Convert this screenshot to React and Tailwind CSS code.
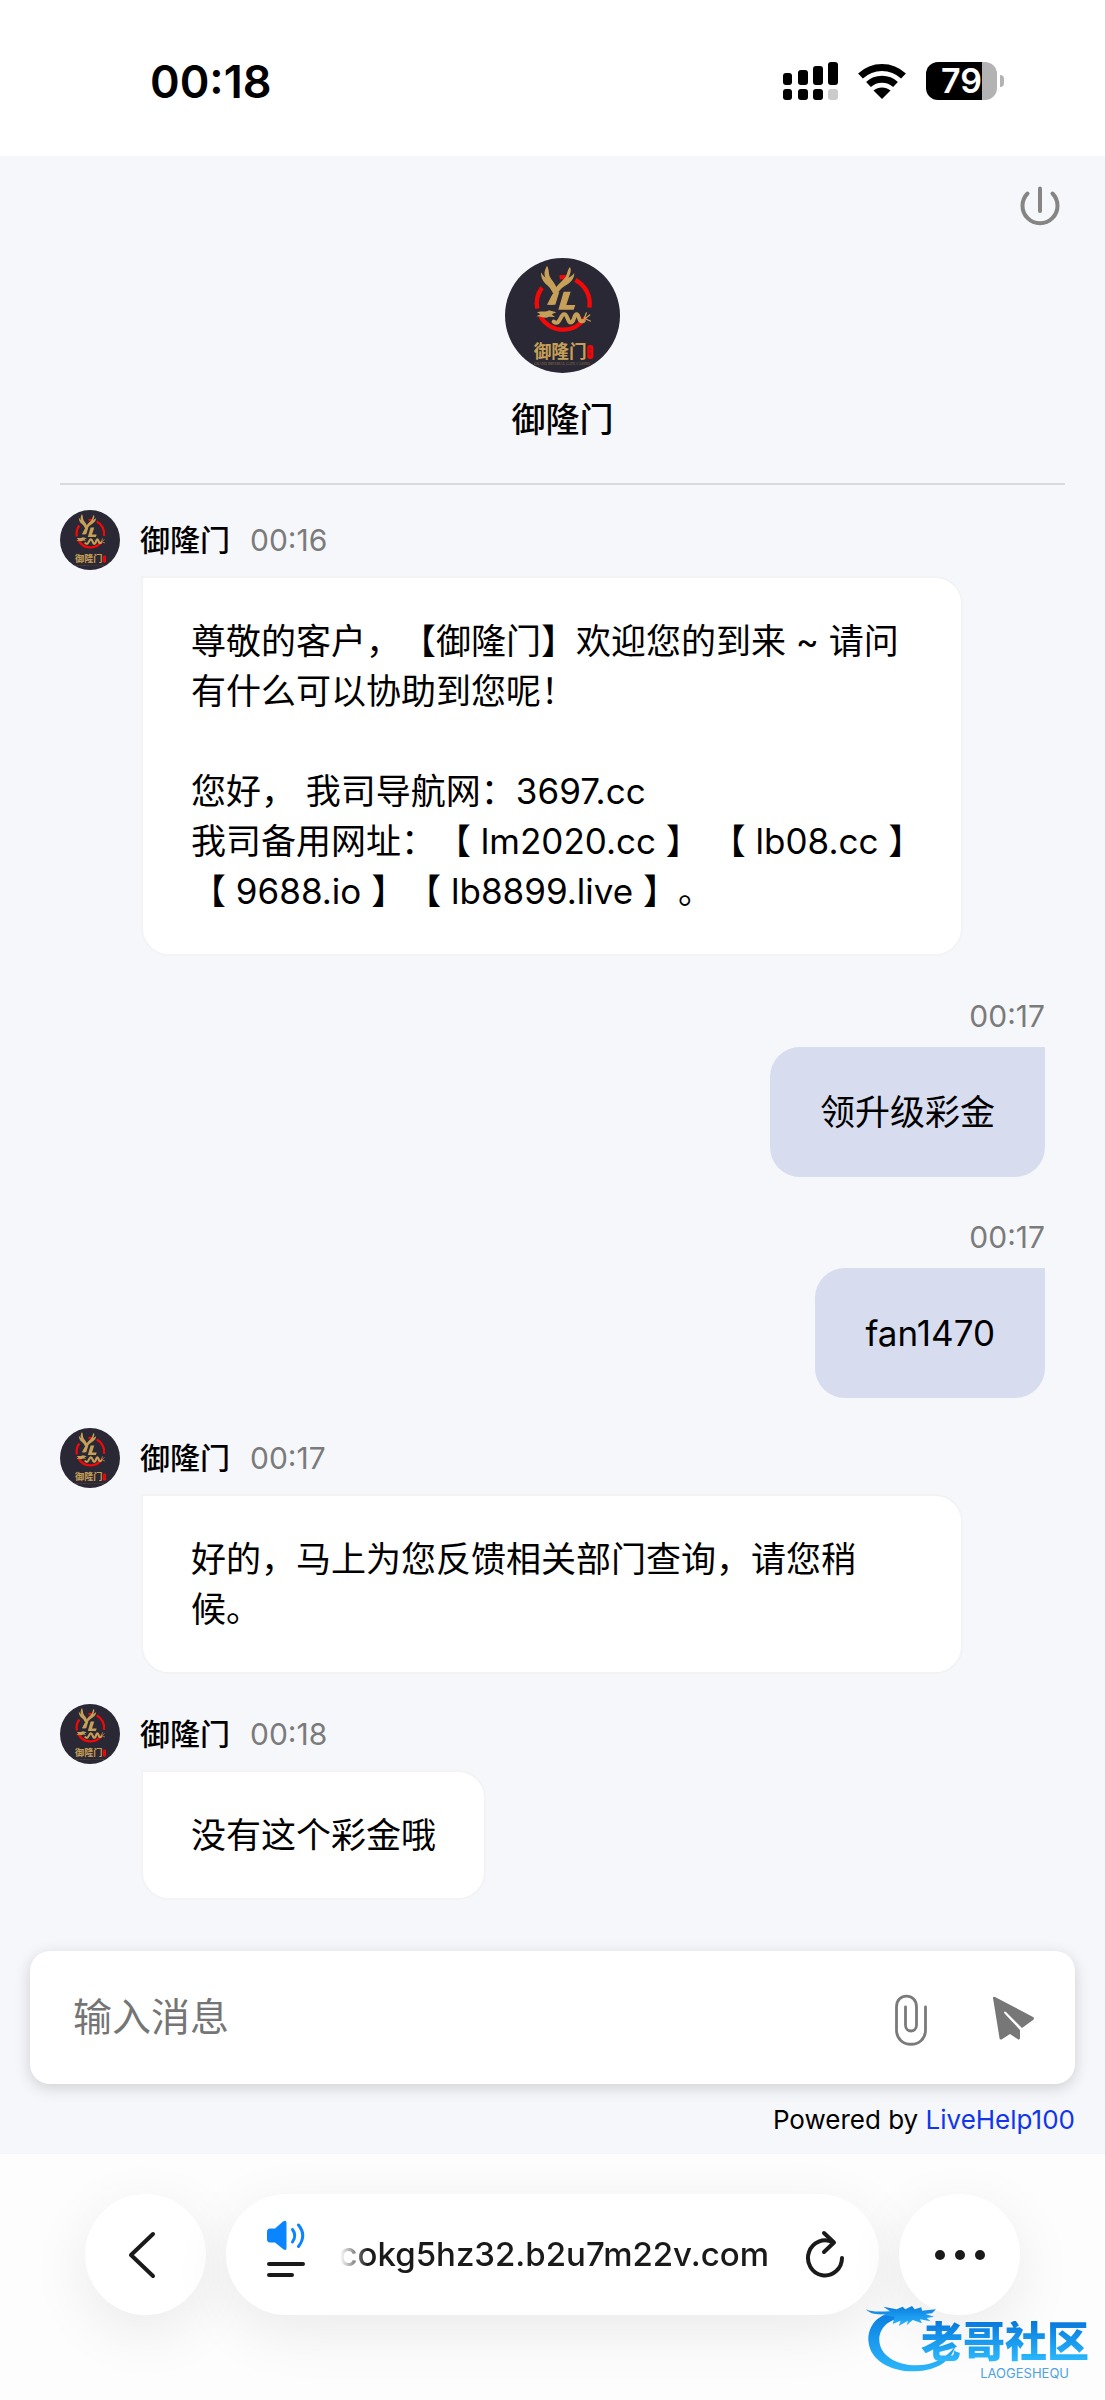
import { useState } from 'react'
import clsx from 'clsx'

const BRAND = '御隆门'

const MESSAGES = [
  {
    id: 1,
    from: 'agent',
    time: '00:16',
    text: '尊敬的客户，【御隆门】欢迎您的到来 ~ 请问有什么可以协助到您呢！\n\n您好， 我司导航网：3697.cc\n我司备用网址：【 lm2020.cc 】 【 lb08.cc 】\n【 9688.io 】【 lb8899.live 】。',
  },
  { id: 2, from: 'visitor', time: '00:17', text: '领升级彩金' },
  { id: 3, from: 'visitor', time: '00:17', text: 'fan1470' },
  { id: 4, from: 'agent', time: '00:17', text: '好的，马上为您反馈相关部门查询，请您稍候。' },
  { id: 5, from: 'agent', time: '00:18', text: '没有这个彩金哦' },
]

function BrandLogo({ className }) {
  return (
    <svg viewBox="0 0 115 115" className={className} role="img" aria-label={BRAND}>
      <circle cx="57.5" cy="57.5" r="57.5" fill="#2a2834" />
      <g transform="translate(20 3) scale(.3333)">
        <g fill="none" stroke="#f40808" strokeWidth="13">
          <path d="M104 49 A79 79 0 0 1 126 49" />
          <path d="M151 57 A79 79 0 0 1 193 140" />
          <path d="M51 80 A79 79 0 0 0 37 143" />
          <path d="M46 166 A79 79 0 0 0 181 170" />
        </g>
        <g fill="#c6a058">
          <path d="M66 14 C58 28 56 40 62 50 C56 46 52 40 48 34 C48 54 56 64 66 72 C78 82 82 94 88 104 L84 131 L66 131 L80 104 L94 104 C100 92 106 84 118 76 C136 66 148 54 148 36 C142 44 136 48 130 50 C136 40 140 28 135 18 C126 28 128 40 120 50 C112 60 102 66 94 78 C88 64 80 58 75 48 C70 38 74 28 66 14 Z" />
          <path d="M82 100 L103 92 L91 131 L70 131 Z" />
          <path d="M116 92 L137 92 L124 132 L151 132 L146 146 L100 146 Z" />
          <path d="M36 154 C48 148 60 156 72 148 L94 154 L80 160 L90 168 L72 167 C62 174 50 167 34 166 L46 160 Z" />
        </g>
        <g fill="none" stroke="#c6a058" strokeWidth="12" strokeLinecap="round">
          <path d="M86 182 C104 196 106 162 116 160 C128 156 128 190 140 184 C150 178 146 158 156 160 C164 164 160 186 176 180" />
          <path d="M174 178 L194 162 M178 172 L184 156 M182 174 L196 180" strokeWidth="4" />
        </g>
        <text x="26" y="290" fontSize="53" fontWeight="700" fill="#c6a058" className="font-['Noto_Sans_CJK_SC',sans-serif]">
          {BRAND}
        </text>
        <rect x="187" y="252" width="18" height="42" rx="8" fill="#f40808" />
        <path d="M191 264 h9 M195 259 v12 M191 278 h9 M195 273 v14" stroke="#8d1a22" strokeWidth="2" />
        <text x="27" y="312" fontSize="11" fill="#8a7046" className="font-['Liberation_Serif',serif]">
          GRAND IMPERIAL GATE CASINO
        </text>
      </g>
    </svg>
  )
}

function StatusBar() {
  return (
    <header className="flex h-39 items-center justify-between bg-white pt-1.5 pr-[101px] pl-[150px]">
      <time className="text-[45px] leading-none font-semibold">00:18</time>
      <div className="flex items-center gap-5">
        <svg width="55" height="38" viewBox="0 0 55 38" aria-hidden="true">
          <rect x="0" y="11" width="9" height="12" rx="3" />
          <rect x="15" y="8" width="10" height="15" rx="3" />
          <rect x="30" y="4" width="10" height="19" rx="3" />
          <rect x="45" y="0" width="10" height="23" rx="3" />
          <rect x="0" y="27" width="9" height="11" rx="3" />
          <rect x="15" y="27" width="10" height="11" rx="3" />
          <rect x="30" y="27" width="10" height="11" rx="3" />
          <rect x="45" y="27" width="10" height="11" rx="3" fill="#cbcbcb" />
        </svg>
        <svg width="48" height="36" viewBox="0 0 48 36" aria-hidden="true">
          <g fill="none" stroke="#000" strokeWidth="7">
            <path d="M2.500 13 C14.500 1.500 33.500 1.500 45.500 13" />
            <path d="M10.500 21.500 C18 14.500 30 14.500 37.500 21.500" />
          </g>
          <path d="M15.500 27.500 C20.500 23.500 27.500 23.500 32.500 27.500 L24 36 Z" />
        </svg>
        <div className="flex items-center gap-[3px]">
          <div className="flex h-[38px] w-[71px] items-center justify-center rounded-xl bg-[linear-gradient(to_right,#000_79%,#b3b3b3_79%)] text-[34px] leading-none font-semibold text-white">
            79
          </div>
          <div className="h-3 w-1 rounded-r-full bg-[#b3b3b3]" />
        </div>
      </div>
    </header>
  )
}

function AgentMessage({ time, text }) {
  // long texts get a tighter right edge, so that addresses stay on one line
  const isLong = text.length > 20

  return (
    <li className="mr-[82px]">
      <div className="flex items-center gap-5">
        <BrandLogo className="size-[60px]" />
        <p className="text-[30px] leading-9 font-medium">{BRAND}</p>
        <time className="text-[30px] leading-9 text-[#7b7b7b]">{time}</time>
      </div>
      <p
        className={clsx(
          'mt-1.5 ml-[81px] w-fit rounded-[28px] rounded-tl-none border-2 border-[#f2f3f5] bg-white py-[38px] pl-12 text-[35px] leading-[50px] whitespace-pre-wrap',
          isLong ? 'pr-9' : 'pr-12',
        )}
      >
        {text}
      </p>
    </li>
  )
}

function VisitorMessage({ time, text }) {
  return (
    <li className="flex flex-col items-end">
      <time className="py-3 text-[30px] leading-[37px] text-[#7b7b7b]">{time}</time>
      <p className="rounded-[30px] rounded-tr-none bg-[#d8dcef] px-[50px] py-10 text-[35px] leading-[50px]">{text}</p>
    </li>
  )
}

function Composer() {
  const [draft, setDraft] = useState('')

  return (
    <form
      onSubmit={(e) => e.preventDefault()}
      className="mx-[30px] flex h-[133px] items-center rounded-[20px] bg-white pr-10 pl-[43px] shadow-[0_4px_16px_rgba(0,0,0,0.16)]"
    >
      <input
        type="text"
        aria-label="输入消息"
        placeholder="输入消息"
        value={draft}
        onChange={(e) => setDraft(e.target.value)}
        className="min-w-0 flex-1 bg-transparent text-[39px] outline-none placeholder:text-[#757575]"
      />
      <button type="button" aria-label="附件" className="mt-1">
        <svg width="34" height="52" viewBox="0 0 34 52" fill="none" stroke="#7a7a7a" strokeWidth="2.800" strokeLinecap="round">
          <path d="M31.500 13 V36 C31.500 55 2.500 55 2.500 36 V13 C2.500 -1.500 22.500 -1.500 22.500 13 V31 C22.500 39 11.500 39 11.500 31 V13" />
        </svg>
      </button>
      <button type="submit" aria-label="发送" className="ml-16">
        <svg width="43" height="46" viewBox="0 0 43 46">
          <path d="M1 3 Q1 1 3 2 L41 22 Q43 23.500 41 25 L30 33 L14 17 Q12.500 16 12 17.500 L13 19 L28 35 V43 Q27.500 45.500 25.500 44 L18 39 L9.500 44.500 Q7.500 45 7.500 43 Z" fill="#777" />
        </svg>
      </button>
    </form>
  )
}

function BrowserBar() {
  return (
    <nav className="flex flex-1 items-start gap-5 overflow-hidden bg-[#fdfdfd] px-[85px] pt-10">
      <button
        type="button"
        aria-label="返回"
        className="flex size-[121px] shrink-0 items-center justify-center rounded-full bg-white pr-2 shadow-[0_16px_60px_rgba(0,0,0,0.08)]"
      >
        <svg width="28" height="48" viewBox="0 0 28 48" fill="none" stroke="#1a1a1a" strokeWidth="4" strokeLinecap="round" strokeLinejoin="round">
          <path d="M25 3 L3 24 L25 45" />
        </svg>
      </button>
      <div className="flex h-[121px] min-w-0 flex-1 items-center rounded-full bg-white pr-[34px] pl-10 shadow-[0_16px_60px_rgba(0,0,0,0.08)]">
        <button type="button" aria-label="页面菜单" className="shrink-0 pb-3">
          <svg width="40" height="58" viewBox="0 0 40 58">
            <path d="M1 12 Q1 8.500 4 8.500 H9 L17 1.500 Q20.500 -.5 20.500 3 V28 Q20.500 31.500 17 29 L9 22.500 H4 Q1 22.500 1 19 Z" fill="#0a84ff" />
            <g fill="none" stroke="#0a84ff" strokeWidth="3" strokeLinecap="round">
              <path d="M26.500 9.500 Q31 15.500 26.500 22" />
              <path d="M32.500 5 Q41 15.500 32.500 26.500" />
            </g>
            <path d="M3 44 H37 M3 55 H26" stroke="#1a1a1a" strokeWidth="4" strokeLinecap="round" />
          </svg>
        </button>
        <div className="mr-9 ml-3 flex min-w-0 flex-1 justify-end mask-[linear-gradient(to_right,transparent_22px,#000_50px)] text-[33px] font-medium text-[#1a1a1a]">
          <span>vcokg5hz32.b2u7m22v.com</span>
        </div>
        <button type="button" aria-label="刷新" className="shrink-0">
          <svg width="40" height="50" viewBox="0 0 40 50" fill="none" stroke="#1a1a1a" strokeWidth="4" strokeLinecap="round" strokeLinejoin="round">
            <path d="M37 28 A17 17.500 0 1 1 28 12.500" />
            <path d="M19 3 L29 12.500 L19 22" />
          </svg>
        </button>
      </div>
      <button
        type="button"
        aria-label="更多"
        className="flex size-[121px] shrink-0 items-center justify-center gap-[10px] rounded-full bg-white shadow-[0_16px_60px_rgba(0,0,0,0.08)]"
      >
        <span className="size-[10px] rounded-full bg-[#1a1a1a]" />
        <span className="size-[10px] rounded-full bg-[#1a1a1a]" />
        <span className="size-[10px] rounded-full bg-[#1a1a1a]" />
      </button>
    </nav>
  )
}

function CommunityBadge() {
  return (
    <div className="absolute right-4 bottom-5 flex w-[227px] items-end justify-end">
      <svg width="100" height="72" viewBox="0 0 300 216" className="absolute bottom-2 left-0" aria-hidden="true">
        <defs>
          <linearGradient id="dragon" x1="0" y1="0" x2="0" y2="1">
            <stop offset="0" stopColor="#0a7de0" />
            <stop offset="1" stopColor="#2bb6fb" />
          </linearGradient>
        </defs>
        <g fill="url(#dragon)">
          <path d="M92 36 C42 46 14 84 20 128 C26 180 86 216 160 214 C222 212 268 184 280 138 C250 178 208 196 164 196 C100 196 54 164 52 122 C50 88 76 60 112 56 Z" />
          <path d="M12 28 C32 38 58 34 84 34 L64 20 L104 28 L122 20 L130 28 L150 18 L158 28 L178 22 L180 32 L222 28 L210 40 L190 42 L216 50 L194 54 L206 64 L174 58 L180 70 L152 60 L134 76 L138 62 L110 78 L116 62 L92 72 L98 50 L62 46 L76 42 C46 46 24 42 12 28 Z" />
        </g>
      </svg>
      <div className="relative flex flex-col items-end gap-1">
        <span className="bg-linear-to-b from-[#0878dc] to-[#2ebcff] bg-clip-text text-[42px] leading-[42px] font-black text-transparent">
          老哥社区
        </span>
        <span className="pr-5 text-[13px] leading-[13px] text-[#4da3e3]">LAOGESHEQU</span>
      </div>
    </div>
  )
}

export default function App() {
  return (
    <div className="relative flex min-h-screen flex-col bg-[#f6f7fa] font-[Inter,'Noto_Sans_CJK_SC',sans-serif] text-black [text-spacing-trim:space-all]">
      <StatusBar />

      <main className="pr-10 pl-[60px]">
        <div className="flex h-[102px] items-start justify-end pt-[30px] pr-1">
          <button type="button" aria-label="结束会话">
            <svg width="42" height="40" viewBox="0 0 42 40" fill="none" stroke="#858585" strokeWidth="4" strokeLinecap="round">
              <path d="M8.500 7.500 A17.500 17.500 0 1 0 33.500 7.500" />
              <path d="M21 2.500 V25" />
            </svg>
          </button>
        </div>

        <div className="flex flex-col items-center border-b-2 border-[#d9dadd] pb-9">
          <BrandLogo className="size-[115px]" />
          <h1 className="mt-5 text-[34px] leading-[54px] font-medium">{BRAND}</h1>
        </div>

        <ul className="flex flex-col gap-[30px] pt-[25px] pr-5">
          {MESSAGES.map((m) =>
            m.from === 'agent' ? (
              <AgentMessage key={m.id} time={m.time} text={m.text} />
            ) : (
              <VisitorMessage key={m.id} time={m.time} text={m.text} />
            ),
          )}
        </ul>
      </main>

      <footer className="pt-[51px]">
        <Composer />
        <p className="px-[30px] pt-5 pb-[18px] text-right text-[26px] leading-8">
          Powered by{' '}
          <a href="#" className="text-[#1236ea]">
            LiveHelp100
          </a>
        </p>
      </footer>

      <BrowserBar />
      <CommunityBadge />
    </div>
  )
}
